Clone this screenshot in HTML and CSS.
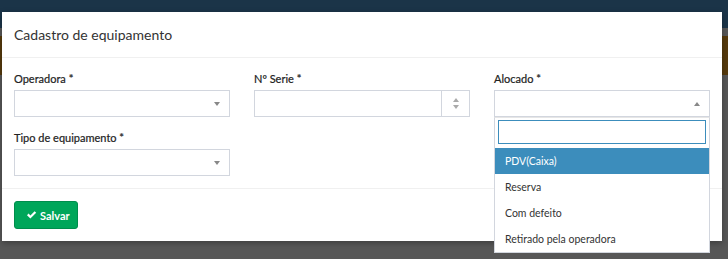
FILE: index.html
```html
<!DOCTYPE html>
<html lang="pt-BR">
<head>
    <meta charset="UTF-8">
    <meta name="viewport" content="width=device-width, initial-scale=1.0">
    <title>Cadastro de equipamento</title>
    <link rel="stylesheet" href="styles.css">
</head>
<body>
    <div class="modal">
        <div class="modal-header">
            <h4 class="modal-title">Cadastro de equipamento</h4>
        </div>

        <div class="modal-body">
            <div class="row">
                <div class="col">
                    <label>Operadora *</label>
                    <div class="select">
                        <span class="arrow down"></span>
                    </div>
                </div>
                <div class="col">
                    <label>Nº Serie *</label>
                    <div class="number">
                        <div class="number-field"></div>
                        <div class="spin">
                            <span class="arrow up small"></span>
                            <span class="arrow down small"></span>
                        </div>
                    </div>
                </div>
                <div class="col">
                    <label>Alocado *</label>
                    <div class="select open">
                        <span class="arrow up"></span>
                        <!-- lista aberta do select -->
                        <div class="dropdown">
                            <div class="search"></div>
                            <ul class="options">
                                <li class="active">PDV(Caixa)</li>
                                <li>Reserva</li>
                                <li>Com defeito</li>
                                <li>Retirado pela operadora</li>
                            </ul>
                        </div>
                    </div>
                </div>
            </div>
            <div class="row">
                <div class="col">
                    <label>Tipo de equipamento *</label>
                    <div class="select">
                        <span class="arrow down"></span>
                    </div>
                </div>
            </div>
        </div>

        <div class="modal-footer">
            <button class="btn-save">
                <svg width="11" height="10" viewBox="0 0 11 10"><path d="M1 5.2 L2.6 3.6 L4.4 5.4 L8.6 1.2 L10.2 2.8 L4.4 8.6 Z" fill="#fff"/></svg>
                Salvar
            </button>
        </div>
    </div>
</body>
</html>
```

FILE: styles.css
```css
* {
    box-sizing: border-box;
}

body {
    margin: 0;
    padding: 12px 0 0 2px;
    height: 259px;
    overflow: hidden;
    font-family: "Lato", "Liberation Sans", sans-serif;
    color: #333;
    background:
        linear-gradient(#1b3448 0, #1b3448 28px, #575757 28px, #575757 36px,
            #563a0c 36px, #563a0c 75px, #575757 75px);
}

/* Modal */
.modal {
    width: 720px;
    background-color: #fff;
    box-shadow: 0 2px 6px rgba(0, 0, 0, 0.3);
}
.modal-header {
    height: 46px;
    padding: 0 12px;
    display: flex;
    align-items: center;
    border-bottom: 1px solid #f0f0f0;
}
.modal-title {
    margin: 0;
    font-size: 14px;
    font-weight: normal;
    color: #333;
}
.modal-body {
    padding: 14px 0 12px;
}
.row {
    display: flex;
}
.row + .row {
    margin-top: 14px;
}
.col {
    width: 240px;
    padding: 0 12px;
}
label {
    display: block;
    font-size: 11px;
    font-weight: normal;
    color: #222;
    -webkit-text-stroke: 0.2px #222;
    height: 18px;
    line-height: 14px;
}

/* Campos */
.select {
    position: relative;
    height: 27px;
    border: 1px solid #d2d6de;
}
.arrow {
    position: absolute;
    right: 9px;
    top: 11px;
    width: 0;
    height: 0;
    border-left: 3px solid transparent;
    border-right: 3px solid transparent;
}
.arrow.down {
    border-top: 4px solid #888;
}
.arrow.up {
    border-bottom: 4px solid #888;
}
.number {
    display: flex;
    height: 27px;
    border: 1px solid #d2d6de;
}
.number-field {
    flex: 1;
}
.spin {
    width: 28px;
    border-left: 1px solid #d2d6de;
    position: relative;
}
.spin .arrow {
    right: 10px;
    border-left-width: 3.5px;
    border-right-width: 3.5px;
}
.spin .arrow.up {
    top: 7px;
    border-bottom-color: #aaa;
}
.spin .arrow.down {
    top: 14px;
    border-top-color: #aaa;
}

/* Lista aberta */
.dropdown {
    position: absolute;
    left: -1px;
    right: -1px;
    top: 26px;
    background-color: #fff;
    border: 1px solid #d2d6de;
    border-top-color: #e6e6e6;
    padding-top: 2px;
    z-index: 2;
}
.search {
    height: 24px;
    margin: 0 3px 4px;
    border: 1px solid #3c8dbc;
}
.options {
    list-style: none;
    margin: 0;
    padding: 0;
}
.options li {
    height: 26px;
    line-height: 26px;
    padding-left: 10px;
    font-size: 10.5px;
    color: #333;
}
.options li.active {
    background-color: #3c8dbc;
    color: #fff;
}

/* Rodapé */
.modal-footer {
    border-top: 1px solid #f0f0f0;
    padding: 12px 12px 12px;
}
.btn-save {
    display: flex;
    align-items: center;
    gap: 3px;
    height: 28px;
    width: 64px;
    padding: 0 0 0 11px;
    background-color: #00a65a;
    border: 1px solid #008d4c;
    border-radius: 3px;
    color: #fff;
    font-family: inherit;
    font-size: 11px;
    font-weight: bold;
}
```
